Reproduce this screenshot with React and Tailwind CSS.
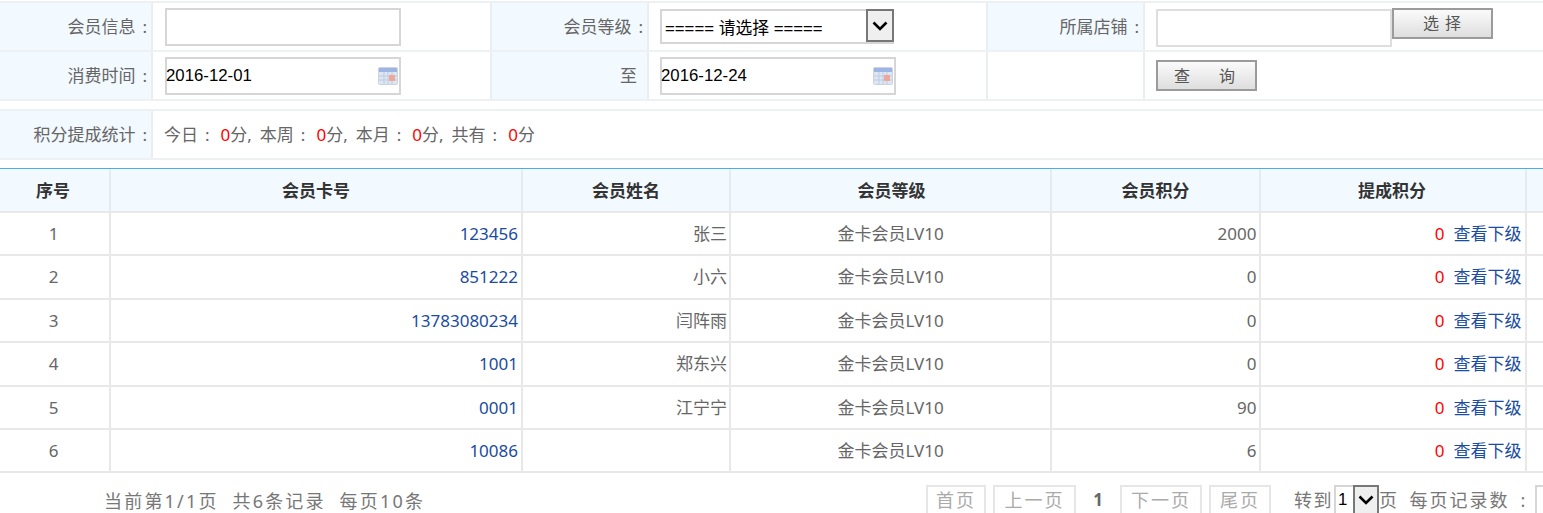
import React from "react";

const Cal = () => (
  <svg width="20" height="18" viewBox="0 0 20 18" className="shrink-0 blur-[0.4px]">
    <rect x="0.5" y="0.5" width="19" height="17" rx="1" fill="#dde6f4" stroke="#ccd3de" />
    <rect x="1" y="1" width="18" height="4" fill="#9db5e2" />
    <path d="M1 9h18M1 13h18M6 5v12M10 5v12M14 5v12" stroke="#c0cbdd" strokeWidth="1" />
    <rect x="11" y="8" width="6" height="6" fill="#eea798" />
  </svg>
);

const Label = ({ children, w, colon = true }) => (
  <div className={`${w} shrink-0 h-full bg-[#f2f9ff] border-r-2 border-[#e9eef2] flex items-center justify-end pr-[4px] whitespace-pre`}>
    {children}
    {colon && <span className="ml-[7px]">:</span>}
  </div>
);

const Field = ({ children, w, className = "" }) => (
  <div className={`${w} shrink-0 h-full border-r-2 border-[#e9eef2] flex ${className}`}>{children}</div>
);

const DateBox = ({ value }) => (
  <div className="w-[236px] h-[38px] mt-[5px] border-2 border-[#d6d6d6] bg-white flex items-center justify-between pr-[1px]">
    <input
      readOnly
      value={value}
      className="w-[200px] h-full -ml-[1px] bg-transparent outline-none text-black text-[16.8px] font-['Liberation_Sans',sans-serif]"
    />
    <Cal />
  </div>
);

const Btn = ({ children, className = "" }) => (
  <button className={`w-[101px] h-[31px] border-2 border-[#9b9b9b] bg-gradient-to-b from-[#fbfbfb] to-[#dedede] text-[#555] text-[16px] flex items-center justify-center whitespace-pre ${className}`}>
    {children}
  </button>
);

const Chevron = ({ w = 16, h = 10 }) => (
  <svg width={w} height={h} viewBox="0 0 16 10">
    <path d="M1.5 1.5 8 8l6.5-6.5" fill="none" stroke="#000" strokeWidth="2.6" />
  </svg>
);

const cols = ["w-[111px]", "w-[412px]", "w-[208px]", "w-[321px]", "w-[209px]", "w-[266px]"];
const headers = ["序号", "会员卡号", "会员姓名", "会员等级", "会员积分", "提成积分"];
const headerPads = ["pr-[3px]", "", "", "pl-[2px]", "", "pr-[2px]"];
const rows = [
  ["1", "123456", "张三", "2000", "h-[43px]"],
  ["2", "851222", "小六", "0", "h-[44px]"],
  ["3", "13783080234", "闫阵雨", "0", "h-[43px]"],
  ["4", "1001", "郑东兴", "0", "h-[44px]"],
  ["5", "0001", "江宁宁", "90", "h-[43px]"],
  ["6", "10086", "", "6", "h-[43px]"],
];

const PageBtn = ({ children, className }) => (
  <span className={`h-[30px] border-2 border-[#e6e6e6] text-[#aaa] flex items-center justify-center tracking-[2px] shrink-0 ${className}`}>
    {children}
  </span>
);

const Stat = ({ label, value, comma }) => (
  <>
    <span>{label}</span>
    <span className="ml-[7px]">:</span>
    <span className="ml-[11px] text-[#ff0000]">{value}</span>
    <span>分</span>
    {comma && <span className="mr-[8px]">,</span>}
  </>
);

export default function App() {
  return (
    <div className="w-[1543px] h-[513px] overflow-hidden bg-white text-[#666] text-[17px] font-['Noto_Sans','Noto_Sans_CJK_SC',sans-serif]">
      <div className="pt-[1px]">
        <div className="border-t-2 border-[#eef1f3]">
          <div className="flex h-[49px] border-b-2 border-[#eef1f3]">
            <Label w="w-[153px]">会员信息</Label>
            <Field w="w-[339px]" className="pl-[12px]">
              <input readOnly className="w-[236px] h-[38px] mt-[5px] border-2 border-[#d6d6d6] bg-white outline-none" />
            </Field>
            <Label w="w-[157px]">会员等级</Label>
            <Field w="w-[339px]" className="pl-[11px]">
              <div className="relative w-[234px] h-[35px] mt-[6px]">
                <select className="w-full h-full appearance-none border-2 border-[#d6d6d6] border-r-0 bg-white pl-[3px] pt-[5px] text-black text-[16.8px] outline-none font-['Liberation_Sans','Noto_Sans_CJK_SC',sans-serif]">
                  <option>===== 请选择 =====</option>
                </select>
                <span className="absolute right-0 top-0 w-[28px] h-[33px] bg-[#efefef] border-2 border-[#777] flex items-center justify-center">
                  <Chevron />
                </span>
              </div>
            </Field>
            <Label w="w-[157px]">所属店铺</Label>
            <div className="flex-1 flex pl-[11px]">
              <input readOnly className="w-[236px] h-[38px] mt-[6px] border-2 border-[#dedede] bg-white outline-none" />
              <Btn className="mt-[5px] pb-[2px] tracking-[1px]">选 择</Btn>
            </div>
          </div>
          <div className="flex h-[49px] border-b-2 border-[#eef1f3]">
            <Label w="w-[153px]">消费时间</Label>
            <Field w="w-[339px]" className="pl-[12px]"><DateBox value="2016-12-01" /></Field>
            <Label w="w-[157px]" colon={false}><span className="pr-[6px]">至</span></Label>
            <Field w="w-[339px]" className="pl-[11px]"><DateBox value="2016-12-24" /></Field>
            <div className="w-[157px] h-full border-r-2 border-[#e9eef2]" />
            <div className="flex-1 flex pl-[11px]">
              <Btn className="mt-[8px] pr-[4px]">查       询</Btn>
            </div>
          </div>
        </div>

        <div className="mt-[8px] border-y-2 border-[#eef1f3] flex h-[51px]">
          <Label w="w-[153px]">积分提成统计</Label>
          <div className="flex-1 flex items-center pl-[11px] whitespace-pre">
            <Stat label="今日" value="0" comma />
            <Stat label="本周" value="0" comma />
            <Stat label="本月" value="0" comma />
            <Stat label="共有" value="0" />
          </div>
        </div>

        <div className="mt-[8px] border-t border-[#48aef0]">
          <div className="flex h-[44px] bg-[#f2f9ff] border-b-2 border-[#e8e8e8] font-bold text-[#333]">
            {headers.map((h, i) => (
              <div key={h} className={`${cols[i]} shrink-0 border-r-2 border-[#e6ebee] flex items-center justify-center pt-[1px] ${headerPads[i]}`}>{h}</div>
            ))}
          </div>
          {rows.map(([n, card, name, pts, h]) => (
            <div key={n} className={`flex ${h} border-b-2 border-[#e8e8e8]`}>
              <div className={`${cols[0]} shrink-0 border-r-2 border-[#e8e8e8] flex items-center justify-center pr-[2px]`}>{n}</div>
              <div className={`${cols[1]} shrink-0 border-r-2 border-[#e8e8e8] flex items-center justify-end pr-[3px] text-[#1a4c9f]`}>{card}</div>
              <div className={`${cols[2]} shrink-0 border-r-2 border-[#e8e8e8] flex items-center justify-end pr-[2px]`}>{name}</div>
              <div className={`${cols[3]} shrink-0 border-r-2 border-[#e8e8e8] flex items-center justify-center`}>金卡会员LV10</div>
              <div className={`${cols[4]} shrink-0 border-r-2 border-[#e8e8e8] flex items-center justify-end pr-[2.5px]`}>{pts}</div>
              <div className={`${cols[5]} shrink-0 border-r-2 border-[#e8e8e8] flex items-center justify-end pr-[3.5px]`}>
                <span className="text-[#ff0000] mr-[9px]">0</span>
                <span className="text-[#1a4c9f]">查看下级</span>
              </div>
            </div>
          ))}
        </div>

        <div className="flex pt-[12px] h-[40px]">
          <div className="w-[926px] shrink-0 pl-[104px] pt-[3px] text-[#777] tracking-[2.2px] text-[18px] whitespace-pre">当前第1/1页  共6条记录  每页10条</div>
          <div className="flex flex-1 items-start text-[18px]">
            <PageBtn className="w-[60px]">首页</PageBtn>
            <PageBtn className="w-[83px] ml-[7px]">上一页</PageBtn>
            <span className="w-[44px] h-[30px] flex items-center justify-center font-bold text-[#666] text-[17px]">1</span>
            <PageBtn className="w-[82px]">下一页</PageBtn>
            <PageBtn className="w-[62px] ml-[7px]">尾页</PageBtn>
            <span className="ml-[23px] tracking-[1.5px] whitespace-pre text-[#777] h-[30px] flex items-center">转到</span>
            <div className="relative ml-[1px] w-[45px] h-[30px] border-2 border-[#d6d6d6] border-r-0 text-black flex items-center pl-[2px] text-[16.8px] font-['Liberation_Sans',sans-serif]">
              1
              <span className="absolute right-0 -top-[2px] w-[26px] h-[30px] bg-[#efefef] border-2 border-[#777] flex items-center justify-center"><Chevron /></span>
            </div>
            <span className="tracking-[1.5px] whitespace-pre text-[#777] h-[30px] flex items-center">页</span>
            <span className="ml-[11px] tracking-[2px] whitespace-pre text-[#777] h-[30px] flex items-center">每页记录数<span className="ml-[11px]">:</span></span>
            <span className="ml-[8px] w-[20px] h-[30px] border-2 border-[#d6d6d6] shrink-0" />
          </div>
        </div>
      </div>
    </div>
  );
}
